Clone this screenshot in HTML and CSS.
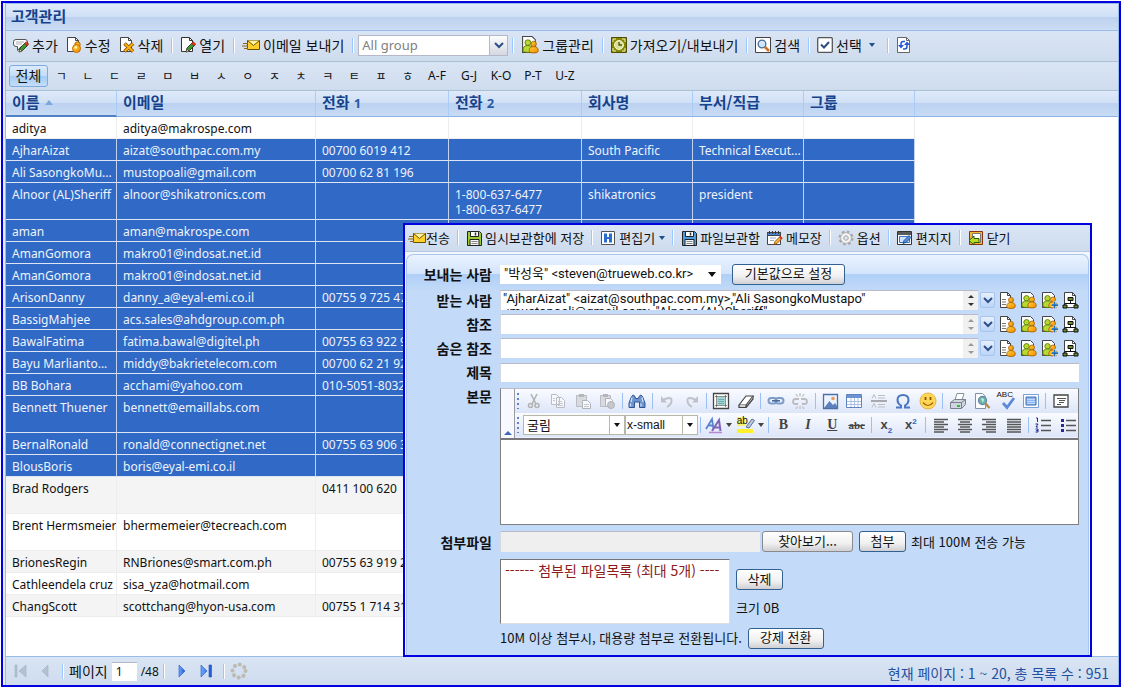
FILE: index.html
```html
<!DOCTYPE html>
<html lang="ko">
<head>
<meta charset="utf-8">
<title>고객관리</title>
<link rel="stylesheet" href="styles.css">
</head>
<body>
<svg class="sprite" aria-hidden="true">
  <defs>
    <linearGradient id="gOrange" x1="0" y1="0" x2="1" y2="1"><stop offset="0" stop-color="#ffd23a"/><stop offset="1" stop-color="#f08a00"/></linearGradient>
    <linearGradient id="gBlue" x1="0" y1="0" x2="1" y2="0"><stop offset="0" stop-color="#6fa8ff"/><stop offset="1" stop-color="#1c55d0"/></linearGradient>
  </defs>
  <symbol id="pencil" viewBox="0 0 16 16"><path d="M6 15l1-4 5-5 2.500 2.500-5 5z" fill="#3a9b2c" stroke="#222" stroke-width=".8"/><path d="M11.500 6.500l1.800-1.800 2.500 2.500L14 9z" fill="#e6331e" stroke="#8a1408" stroke-width=".6"/><path d="M6 15l.9-3 2.200 2.200z" fill="#f7d38b" stroke="#222" stroke-width=".5"/></symbol>
  <symbol id="add" viewBox="0 0 16 16"><path d="M3 2.500h9q2.500 0 2.500 2.500v2q0 2.500-2.500 2.500H8l-3.500 4V9.500H3Q.5 9.500.5 7V5Q.5 2.500 3 2.500z" fill="#fff" stroke="#555"/><path d="M3 5h8M3 7h6" stroke="#aaa"/><use href="#pencil"/></symbol>
  <symbol id="edit" viewBox="0 0 16 16"><path d="M1.500.5h8l3 3v11h-11z" fill="#fff" stroke="#444"/><path d="M9.500.5v3h3" fill="none" stroke="#444"/><circle cx="11.500" cy="7.500" r="2.700" fill="#ffb21c" stroke="#b56400"/><circle cx="10.500" cy="11.500" r="4" fill="url(#gOrange)" stroke="#c06800"/><circle cx="9.800" cy="10.500" r="1.400" fill="#fff3a8"/></symbol>
  <symbol id="del" viewBox="0 0 16 16"><path d="M1.500.5h8l3 3v11h-11z" fill="#fff" stroke="#444"/><path d="M9.500.5v3h3" fill="none" stroke="#444"/><path d="M5.500 6.500l8.500 8M14 6.500l-8.500 8" stroke="#7b4a00" stroke-width="3.600"/><path d="M5.800 6.800l8 7.500M13.800 6.800l-8 7.500" stroke="#ffb000" stroke-width="2"/></symbol>
  <symbol id="open" viewBox="0 0 16 16"><path d="M1.500.5h8l3 3v11h-11z" fill="#fff" stroke="#333"/><path d="M9.500.5v3h3" fill="none" stroke="#333"/><use href="#pencil"/></symbol>
  <symbol id="mail" viewBox="0 0 18 16"><path d="M5.500 3.500h12v9h-12z" fill="#ffd02a" stroke="#6b5200"/><path d="M5.500 3.500l6 5 6-5" fill="#fff2a0" stroke="#6b5200"/><path d="M1 6.500h5M0 9h6M2 11.500h4" stroke="#8f6418"/></symbol>
  <symbol id="person" viewBox="0 0 10 12"><circle cx="5" cy="3" r="2.500" stroke-width=".8"/><path d="M.7 9.500Q.7 5.500 5 5.500t4.300 4Q9.300 11.500 5 11.500T.7 9.500z" stroke-width=".8"/></symbol>
  <symbol id="one" viewBox="0 0 17 17"><path d="M1.500.5h7l3 3v12h-10z" fill="#fff" stroke="#444"/><path d="M8.500.5v3h3" fill="none" stroke="#444"/><path d="M3 7.500h4M3 10h4M3 12.500h4" stroke="#777"/><use href="#person" x="7" y="5" width="10" height="12" fill="url(#gOrange)" stroke="#a85c00"/></symbol>
  <symbol id="group" viewBox="0 0 17 17"><path d="M1.500.5h9l3 3v12h-12z" fill="#fff" stroke="#444"/><use href="#person" x="1" y="3" width="11" height="13" fill="#b8d832" stroke="#5c7a00"/><use href="#person" x="7" y="4" width="10" height="13" fill="url(#gOrange)" stroke="#a85c00"/></symbol>
  <symbol id="groupadd" viewBox="0 0 17 17"><use href="#group"/><path d="M13.500 9.500v7.500M10 13.200h7" stroke="#dff0ff" stroke-width="3"/><path d="M13.500 10v6.500M10.500 13.200h6.500" stroke="#1f6fb8" stroke-width="1.800"/></symbol>
  <symbol id="org" viewBox="0 0 17 17"><path d="M2.500.5h8l3 3v12h-11z" fill="#fff" stroke="#444"/><path d="M10.500.5v3h3" fill="none" stroke="#444"/><path d="M6 5.500h5v3H6zM1 13h4v3H1zM12 13h4v3h-4z" fill="#6a8a28" stroke="#111"/><path d="M8.500 8.500v3M3 13v-1.500h11V13" fill="none" stroke="#111"/></symbol>
  <symbol id="transfer" viewBox="0 0 16 16"><path d="M.5.5h15v15H.5z" fill="#858500" stroke="#4f4f00"/><circle cx="8" cy="8" r="4.500" fill="#d9e09b" stroke="#f5f7d0"/><path d="M8 5v3h3" fill="none" stroke="#555500" stroke-width="1.300"/><path d="M2 5V2h3M11 2h3v3M14 11v3h-3M5 14H2v-3" fill="none" stroke="#f0f0c0"/></symbol>
  <symbol id="search" viewBox="0 0 16 16"><path d="M.5.5h15v15H.5z" fill="#fff" stroke="#444"/><circle cx="7" cy="7" r="3.800" fill="#cfe8ff" stroke="#4a6a92" stroke-width="1.300"/><path d="M10 10l4 4" stroke="#d07020" stroke-width="2.500"/></symbol>
  <symbol id="check" viewBox="0 0 16 16"><rect x=".7" y=".7" width="14.600" height="14.600" rx="1" fill="#fff" stroke="#555" stroke-width="1.300"/><path d="M4 7.500L7 10.500l5-5.500" fill="none" stroke="#2c4f80" stroke-width="2"/></symbol>
  <symbol id="refresh" viewBox="0 0 16 16"><path d="M1.500.5h9l3 3v12h-12z" fill="#fff" stroke="#666"/><path d="M10.500.5v3h3" fill="none" stroke="#666"/><path d="M9 4.500H7Q5 4.500 5 7v2M7 12h1.500Q11 12 11 9.500V7" fill="none" stroke="#2458d8" stroke-width="1.500"/><path d="M2 8h6l-3 3.500zM8 8h6l-3-3.500z" fill="#2458d8"/></symbol>
  <symbol id="disk" viewBox="0 0 16 16"><path d="M1.500 1.500h12l2 2v12h-14z" stroke="#222"/><path d="M4.500 1.500h8v5h-8z" fill="#fff" stroke="#222"/><path d="M9.500 2.500v3" stroke="#333" stroke-width="1.500"/><path d="M4 9.500h9v6H4z" fill="#f4f4f4" stroke="#222"/><path d="M5.500 11.500h6M5.500 13.500h6" stroke="#888"/></symbol>
  <symbol id="hbox" viewBox="0 0 16 16"><path d="M1.500 1.500h13v13h-13z" fill="#fff" stroke="#555"/><path d="M4 3.500h3v3.500h2V3.500h3v9H9V9H7v3.500H4z" fill="#2a6fd0"/></symbol>
  <symbol id="memo" viewBox="0 0 16 16"><path d="M.5 2.500h13v12H.5z" fill="#fff" stroke="#444"/><path d="M.5 2.500h13v3H.5z" fill="#4c86d0" stroke="#444"/><path d="M2.500 1v3M5.500 1v3M8.500 1v3M11.500 1v3" stroke="#333"/><path d="M3 8h6M3 10.500h4" stroke="#9ab"/><path d="M7 14.500l1-3 5-5 2 2-5 5z" fill="#f4b13a" stroke="#8a3d10" stroke-width=".8"/><path d="M12 7.500l2 2 1.500-1.500-2-2z" fill="#d83020"/></symbol>
  <symbol id="gear" viewBox="0 0 16 16"><circle cx="8" cy="8" r="6.200" fill="none" stroke="#a8a8a8" stroke-width="2.600" stroke-dasharray="2.600 2.270"/><circle cx="8" cy="8" r="5.300" fill="#f7f7f7" stroke="#b4b4b4"/><circle cx="8" cy="8" r="2.300" fill="#dfe6ef" stroke="#a8a8a8"/></symbol>
  <symbol id="letter" viewBox="0 0 16 16"><path d="M.5 1.500h14v13H.5z" fill="#fff" stroke="#333"/><path d="M1 2h13v3H1z" fill="#5a5a5a"/><path d="M2.500 6.500h10v6h-10z" fill="#cfe3ff" stroke="#3d78c8"/><path d="M6 13.500l1-3 5-5 2 2-5 5z" fill="#4f90e0" stroke="#1c3f78" stroke-width=".8"/></symbol>
  <symbol id="close" viewBox="0 0 16 16"><path d="M1.500 1.500h13v13h-13z" fill="#f7b733" stroke="#8a3010"/><path d="M4.500 3.500h8v9h-8z" fill="#fff" stroke="#777"/><path d="M1 10.500l5-4.500v2.500h5v4H6V15z" fill="#b8dc28" stroke="#2a5c00"/></symbol>

  <symbol id="cut" viewBox="0 0 18 18"><g fill="none" stroke="#b3b3b3" stroke-width="1.600"><path d="M6 2l5 10M12 2L7 12"/><circle cx="5.500" cy="13.500" r="2"/><circle cx="12" cy="13.500" r="2"/></g></symbol>
  <symbol id="copy" viewBox="0 0 18 18"><path d="M2.500 2.500h5l3 3v7h-8zM7.500 5.500h5l3 3v7h-8z" fill="#f7f8fc" stroke="#b9bcc4"/><path d="M9 9.500h4M9 11.500h5M9 13.500h5M4 6.500h2M4 8.500h2" stroke="#c6c8ce"/></symbol>
  <symbol id="paste" viewBox="0 0 18 18"><path d="M2.500 3.500h10v11h-10z" fill="#d9dade" stroke="#b9bcc4"/><path d="M5 2h5v3H5z" fill="#b5b6ba"/><path d="M8.500 8.500h5l3 3v5h-8z" fill="#f7f8fc" stroke="#b0b2b8"/><path d="M10 12.500h5M10 14.500h5" stroke="#c6c8ce"/></symbol>
  <symbol id="pastespecial" viewBox="0 0 18 18"><path d="M2.500 3.500h10v11h-10z" fill="#d9dade" stroke="#b9bcc4"/><path d="M5 2h5v3H5z" fill="#b5b6ba"/><path d="M7.500 6.500h5l2 2v6h-7z" fill="#f7f8fc" stroke="#b0b2b8"/><circle cx="13" cy="13" r="3.500" fill="#c6c8ce" stroke="#b0b2b8"/></symbol>
  <symbol id="find" viewBox="0 0 18 18"><path d="M3.500 4.500Q5 1.500 7 4.500l.5 2h3l.5-2q2-3 3.500 0L17 11v4.500h-5.500V10h-5v5.500H1V11z" fill="#6c93d0" stroke="#2d5596"/><path d="M4 5.500L3 10M14 5.500l1 4.500M2.500 11.500v3M13 11.500v3" stroke="#c9dcf7" stroke-width="1.300"/></symbol>
  <symbol id="undo" viewBox="0 0 18 18"><path d="M5 8q8-4 8.500 0T9 15" fill="none" stroke="#bfc2c9" stroke-width="2"/><path d="M3 4v6.500h6z" fill="#bfc2c9"/></symbol>
  <symbol id="redo" viewBox="0 0 18 18"><path d="M13 8Q5 4 4.500 8T9 15" fill="none" stroke="#bfc2c9" stroke-width="2"/><path d="M15 4v6.500H9z" fill="#bfc2c9"/></symbol>
  <symbol id="selall" viewBox="0 0 18 18"><path d="M1.500 1.500h15v15h-15z" fill="#fff" stroke="#444" stroke-width="1.300"/><path d="M5 5h8v8H5z" fill="#9fd6d5"/><path d="M3.500 4.500h11M3.500 13.500h11M4.500 3.500v11M13.500 3.500v11" stroke="#222" stroke-dasharray="1 1"/><path d="M6 7.500h6M6 9.500h6M6 11.500h6" stroke="#6a9a9a" stroke-width=".7"/></symbol>
  <symbol id="eraser" viewBox="0 0 18 18"><path d="M2 13l7-9h7l-7 9z" fill="#fff" stroke="#444" stroke-width="1.200"/><path d="M2 13v2.500h7V13M9 15.500l7-8.500V4" fill="#cfd0d4" stroke="#444" stroke-width="1.200"/></symbol>
  <symbol id="link" viewBox="0 0 18 18"><g fill="none" stroke-width="2"><rect x="1.500" y="6" width="8" height="5.500" rx="2.700" stroke="#7f9cc6"/><rect x="8.500" y="6" width="8" height="5.500" rx="2.700" stroke="#7f9cc6"/><path d="M5 8.800h8" stroke="#3d659f" stroke-width="1.500"/></g></symbol>
  <symbol id="unlink" viewBox="0 0 18 18"><g fill="none" stroke="#bcbcc0" stroke-width="1.800"><path d="M8 7H4.500Q2 7 2 9.500T4.500 12H7M10 7h3.500Q16 7 16 9.500T13.500 12H11"/><path d="M9 1v3.500M5 2l1.500 2.500M13 2l-1.500 2.500M9 14v3M5 17l1.500-2.500M13 17l-1.500-2.500" stroke-width="1.200"/></g></symbol>
  <symbol id="image" viewBox="0 0 18 18"><path d="M2.500 2.500h14v14h-14z" fill="#eaf3ff" stroke="#4d6fa8" stroke-width="1.300"/><path d="M3 16l5.500-7L12 13l2-2 2 3v2z" fill="#5b80bd"/><circle cx="12" cy="6.500" r="1.800" fill="#e89a5a"/></symbol>
  <symbol id="table" viewBox="0 0 18 18"><path d="M1.500 2.500h15v13h-15z" fill="#fff" stroke="#5e83be"/><path d="M2 3h14v3H2z" fill="#6d94d2"/><path d="M2 9.500h14M2 12.500h14M6 6v9M9.500 6v9M13 6v9" stroke="#a9c0e2"/></symbol>
  <symbol id="hr" viewBox="0 0 18 18"><path d="M1 9h16" stroke="#a8a8ad" stroke-width="2"/><path d="M8 3.500h7M8 6h7M8 12.500h7M8 15h7" stroke="#bebec3"/><path d="M2 6.500l2-4 2 4M2 15.500l2-4 2 4" fill="none" stroke="#bebec3"/></symbol>
  <symbol id="omega" viewBox="0 0 18 18"><path d="M2 15.500h5v-2Q3.500 11.500 3.500 8 3.500 3 9 3t5.500 5q0 3.500-3.500 5.500v2h5" fill="none" stroke="#4b78c0" stroke-width="2"/></symbol>
  <symbol id="smile" viewBox="0 0 18 18"><circle cx="9" cy="9" r="8" fill="#ffd757" stroke="#e6b545"/><path d="M6.500 5v3M11.500 5v3" stroke="#8b5500" stroke-width="1.800"/><path d="M4 10.500q5 6 10 0" fill="none" stroke="#a96010" stroke-width="1.200"/></symbol>
  <symbol id="print" viewBox="0 0 18 18"><path d="M6 8l2-6.500h7L13 8z" fill="#fff" stroke="#8a9098"/><path d="M1.500 10.500l4-3h11v5l-4 4h-11z" fill="#cfd5de" stroke="#7a808c"/><path d="M1.500 10.500h11v6M12.500 10.500l4-3" fill="none" stroke="#7a808c"/><path d="M8 13h3v2H8z" fill="#35ba3a"/></symbol>
  <symbol id="preview" viewBox="0 0 18 18"><path d="M2.500 1.500h7l3 3v12h-10z" fill="#fff" stroke="#8291a8"/><circle cx="9.500" cy="8.500" r="4" fill="#6bb8a0" stroke="#6d87ac" stroke-width="1.300"/><path d="M8 6l3 1-1 4z" fill="#c9efff"/><path d="M12.500 11.500l4 4.500" stroke="#b38a48" stroke-width="2.200"/></symbol>
  <symbol id="spell" viewBox="0 0 18 18"><path d="M5 11l4 4.500L16 6" fill="none" stroke="#5d8ad8" stroke-width="2.800"/></symbol>
  <symbol id="full" viewBox="0 0 18 18"><path d="M1.500 2.500h15v13h-15z" fill="#fff" stroke="#7c9fd4"/><path d="M4 5h10v8H4z" fill="#8cb6ef" stroke="#3f6fb8"/><path d="M5 7.500h8M5 9.500h8M5 11.500h8" stroke="#d7e7ff" stroke-width=".7"/></symbol>
  <symbol id="source" viewBox="0 0 18 18"><path d="M2 3h14v12H2z" fill="#fff" stroke="#444" stroke-width="1.300"/><path d="M5 6.500h9M7 8.500h6M7 10.500h5M5 12.500h4" stroke="#555"/></symbol>
  <symbol id="fontcolor" viewBox="0 0 18 18"><path d="M1 13L7 3l1.500 10M4 9.500h4" fill="none" stroke="#5784cc" stroke-width="1.800"/><path d="M7 15L14 4l1.500 11M10 11.500h4.500" fill="none" stroke="#8064b8" stroke-width="2"/><path d="M4 16.500h13" stroke="#b68ad0" stroke-width="1.500"/></symbol>
  <symbol id="marker" viewBox="0 0 18 18"><path d="M0 1h8v9H0z" fill="#f7f06a"/><path d="M9 11l6-8 2.500 1.500L12 12z" fill="#b9c8de" stroke="#5a6f90"/><path d="M0 13h16v4H0z" fill="#fff02a"/></symbol>
  <symbol id="al" viewBox="0 0 18 18"><path d="M2 3.500h14M2 8.500h14M2 13.500h14M2 6h10M2 11h10M2 16h10" stroke="#555" stroke-width="1.300"/></symbol>
  <symbol id="ac" viewBox="0 0 18 18"><path d="M2 3.500h14M2 8.500h14M2 13.500h14M4 6h10M4 11h10M4 16h10" stroke="#555" stroke-width="1.300"/></symbol>
  <symbol id="ar" viewBox="0 0 18 18"><path d="M2 3.500h14M2 8.500h14M2 13.500h14M6 6h10M6 11h10M6 16h10" stroke="#555" stroke-width="1.300"/></symbol>
  <symbol id="aj" viewBox="0 0 18 18"><path d="M2 3.500h14M2 8.500h14M2 13.500h14M2 6h14M2 11h14M2 16h14" stroke="#555" stroke-width="1.300"/></symbol>
  <symbol id="ol" viewBox="0 0 18 18"><path d="M7 4.500h10M7 9.500h10M7 14.500h10" stroke="#555" stroke-width="1.300"/><path d="M2 2h1.500v4M1.500 8H4L2 11h2M1.500 13H4v1.500H2.500 4V16H1.500" fill="none" stroke="#282898"/></symbol>
  <symbol id="ul" viewBox="0 0 18 18"><path d="M7 4.500h10M7 9.500h10M7 14.500h10" stroke="#555" stroke-width="1.300"/><path d="M2 3h3v3H2zM2 8h3v3H2zM2 13h3v3H2z" fill="#282898"/></symbol>

  <symbol id="first" viewBox="0 0 14 14"><path d="M1 1h2v12H1zM12 1v12L5 7z" fill="#b4c2cf" stroke="#9fb0bf" stroke-width=".6"/></symbol>
  <symbol id="prev" viewBox="0 0 14 14"><path d="M10 1v12L4 7z" fill="#b4c2cf" stroke="#9fb0bf" stroke-width=".6"/></symbol>
  <symbol id="next" viewBox="0 0 14 14"><path d="M4 1v12l6-6z" fill="url(#gBlue)" stroke="#1f56c4" stroke-width=".6"/></symbol>
  <symbol id="last" viewBox="0 0 14 14"><path d="M2 1v12l6-6zM10 1h2.500v12H10z" fill="url(#gBlue)" stroke="#1f56c4" stroke-width=".6"/></symbol>
  <symbol id="load" viewBox="0 0 18 18"><circle cx="9" cy="9" r="6.500" fill="none" stroke="#bdb9b3" stroke-width="4" stroke-linecap="round" stroke-dasharray=".1 5"/></symbol>
  <symbol id="chev" viewBox="0 0 10 10"><path d="M1 3l4 4 4-4" fill="none" stroke="#2c4f88" stroke-width="2"/></symbol>
</svg>

<main class="frame">
  <section class="panel">
    <h1 class="title">고객관리</h1>
    <div class="toolbar">
      <button class="tool"><svg class="i16"><use href="#add"/></svg>추가</button>
      <button class="tool"><svg class="i16"><use href="#edit"/></svg>수정</button>
      <button class="tool"><svg class="i16"><use href="#del"/></svg>삭제</button>
      <i class="sep"></i>
      <button class="tool"><svg class="i16"><use href="#open"/></svg>열기</button>
      <i class="sep"></i>
      <button class="tool"><svg class="i18"><use href="#mail"/></svg>이메일 보내기</button>
      <i class="sep"></i>
      <label class="combo"><select aria-label="그룹"><option>All group</option></select><span class="trigger"><svg class="i10"><use href="#chev"/></svg></span></label>
      <i class="sep tight"></i>
      <button class="tool"><svg class="i18"><use href="#group"/></svg>그룹관리</button>
      <i class="sep"></i>
      <button class="tool"><svg class="i16"><use href="#transfer"/></svg>가져오기/내보내기</button>
      <i class="sep"></i>
      <button class="tool"><svg class="i16"><use href="#search"/></svg>검색</button>
      <i class="sep"></i>
      <button class="tool"><svg class="i16"><use href="#check"/></svg>선택<span class="caret wide"></span></button>
      <i class="sep"></i>
      <button class="tool" aria-label="새로고침"><svg class="i16"><use href="#refresh"/></svg></button>
    </div>
    <div class="alpha">
      <button class="all">전체</button>
      <div class="jamo">
        <button>ㄱ</button><button>ㄴ</button><button>ㄷ</button><button>ㄹ</button><button>ㅁ</button><button>ㅂ</button><button>ㅅ</button><button>ㅇ</button><button>ㅈ</button><button>ㅊ</button><button>ㅋ</button><button>ㅌ</button><button>ㅍ</button><button>ㅎ</button>
      </div>
      <div class="latin"><button>A-F</button><button>G-J</button><button>K-O</button><button>P-T</button><button>U-Z</button></div>
    </div>
    <div class="grid">
      <table>
        <colgroup><col class="c-name"><col class="c-mail"><col class="c-tel"><col class="c-tel"><col class="c-name"><col class="c-name"><col class="c-name"><col></colgroup>
        <thead><tr><th class="sorted">이름<span class="asc"></span></th><th>이메일</th><th>전화 <b>1</b></th><th>전화 <b>2</b></th><th>회사명</th><th>부서/직급</th><th>그룹</th><td class="fill"></td></tr></thead>
        <tbody>
          <tr><td>aditya</td><td>aditya@makrospe.com</td><td></td><td></td><td></td><td></td><td></td><td class="fill"></td></tr>
          <tr class="on"><td>AjharAizat</td><td>aizat@southpac.com.my</td><td>00700 6019 412</td><td></td><td>South Pacific</td><td>Technical Execut...</td><td></td><td class="fill"></td></tr>
          <tr class="on"><td>Ali SasongkoMu...</td><td>mustopoali@gmail.com</td><td>00700 62 81 196</td><td></td><td></td><td></td><td></td><td class="fill"></td></tr>
          <tr class="on tall"><td>Alnoor (AL)Sheriff</td><td>alnoor@shikatronics.com</td><td></td><td>1-800-637-6477<br>1-800-637-6477</td><td>shikatronics</td><td>president</td><td></td><td class="fill"></td></tr>
          <tr class="on"><td>aman</td><td>aman@makrospe.com</td><td></td><td></td><td></td><td></td><td></td><td class="fill"></td></tr>
          <tr class="on"><td>AmanGomora</td><td>makro01@indosat.net.id</td><td></td><td></td><td></td><td></td><td></td><td class="fill"></td></tr>
          <tr class="on"><td>AmanGomora</td><td>makro01@indosat.net.id</td><td></td><td></td><td></td><td></td><td></td><td class="fill"></td></tr>
          <tr class="on"><td>ArisonDanny</td><td>danny_a@eyal-emi.co.il</td><td>00755 9 725 47</td><td></td><td></td><td></td><td></td><td class="fill"></td></tr>
          <tr class="on"><td>BassigMahjee</td><td>acs.sales@ahdgroup.com.ph</td><td></td><td></td><td></td><td></td><td></td><td class="fill"></td></tr>
          <tr class="on"><td>BawalFatima</td><td>fatima.bawal@digitel.ph</td><td>00755 63 922 9</td><td></td><td></td><td></td><td></td><td class="fill"></td></tr>
          <tr class="on"><td>Bayu Marlianto...</td><td>middy@bakrietelecom.com</td><td>00700 62 21 92</td><td></td><td></td><td></td><td></td><td class="fill"></td></tr>
          <tr class="on"><td>BB Bohara</td><td>acchami@yahoo.com</td><td>010-5051-8032</td><td></td><td></td><td></td><td></td><td class="fill"></td></tr>
          <tr class="on tall"><td>Bennett Thuener</td><td>bennett@emaillabs.com</td><td></td><td></td><td></td><td></td><td></td><td class="fill"></td></tr>
          <tr class="on"><td>BernalRonald</td><td>ronald@connectignet.net</td><td>00755 63 906 3</td><td></td><td></td><td></td><td></td><td class="fill"></td></tr>
          <tr class="on"><td>BlousBoris</td><td>boris@eyal-emi.co.il</td><td></td><td></td><td></td><td></td><td></td><td class="fill"></td></tr>
          <tr class="tall"><td>Brad Rodgers</td><td></td><td>0411 100 620</td><td></td><td></td><td></td><td></td><td class="fill"></td></tr>
          <tr class="tall"><td>Brent Hermsmeier</td><td>bhermemeier@tecreach.com</td><td></td><td></td><td></td><td></td><td></td><td class="fill"></td></tr>
          <tr><td>BrionesRegin</td><td>RNBriones@smart.com.ph</td><td>00755 63 919 2</td><td></td><td></td><td></td><td></td><td class="fill"></td></tr>
          <tr><td>Cathleendela cruz</td><td>sisa_yza@hotmail.com</td><td></td><td></td><td></td><td></td><td></td><td class="fill"></td></tr>
          <tr><td>ChangScott</td><td>scottchang@hyon-usa.com</td><td>00755 1 714 31</td><td></td><td></td><td></td><td></td><td class="fill"></td></tr>
        </tbody>
      </table>
    </div>
    <footer class="pager">
      <button aria-label="처음"><svg class="i14"><use href="#first"/></svg></button>
      <button aria-label="이전"><svg class="i14"><use href="#prev"/></svg></button>
      <i class="sep"></i>
      <label class="pageno">페이지 <input value="1"></label><span class="pages">/48</span>
      <i class="sep"></i>
      <button aria-label="다음"><svg class="i14"><use href="#next"/></svg></button>
      <button aria-label="마지막"><svg class="i14"><use href="#last"/></svg></button>
      <i class="sep"></i>
      <button class="load" aria-label="새로고침"><svg class="i18"><use href="#load"/></svg></button>
      <span class="status">현재 페이지 : 1 ~ 20, 총 목록 수 : 951</span>
    </footer>
  </section>

  <section class="dialog" role="dialog" aria-label="메일 쓰기">
    <div class="dtools">
      <button class="tool near"><svg class="i18"><use href="#mail"/></svg>전송</button>
      <i class="sep"></i>
      <button class="tool"><svg class="i16 green"><use href="#disk"/></svg>임시보관함에 저장</button>
      <i class="sep"></i>
      <button class="tool"><svg class="i16"><use href="#hbox"/></svg>편집기<span class="caret"></span></button>
      <i class="sep"></i>
      <button class="tool"><svg class="i16 blue"><use href="#disk"/></svg>파일보관함</button>
      <button class="tool"><svg class="i16"><use href="#memo"/></svg>메모장</button>
      <i class="sep"></i>
      <button class="tool"><svg class="i16"><use href="#gear"/></svg>옵션</button>
      <i class="sep"></i>
      <button class="tool"><svg class="i16"><use href="#letter"/></svg>편지지</button>
      <i class="sep"></i>
      <button class="tool"><svg class="i16"><use href="#close"/></svg>닫기</button>
    </div>
    <form class="form">
      <div class="row first">
        <label class="lab" for="from">보내는 사람</label>
        <span class="from"><select id="from"><option>"박성욱" &lt;steven@trueweb.co.kr&gt;</option></select></span>
        <button type="button" class="btn w-default">기본값으로 설정</button>
      </div>
      <div class="row">
        <label class="lab" for="to">받는 사람</label>
        <div class="addr on"><textarea id="to">"AjharAizat" &lt;aizat@southpac.com.my&gt;,"Ali SasongkoMustapo" &lt;mustopoali@gmail.com&gt;,"Alnoor (AL)Sheriff"</textarea><span class="spin"></span></div>
        <div class="picks"><button type="button" class="drop" aria-label="최근"><svg class="i10"><use href="#chev"/></svg></button><button type="button" aria-label="주소록"><svg class="i17"><use href="#one"/></svg></button><button type="button" aria-label="그룹"><svg class="i17"><use href="#group"/></svg></button><button type="button" aria-label="그룹 추가"><svg class="i17"><use href="#groupadd"/></svg></button><button type="button" aria-label="조직도"><svg class="i17"><use href="#org"/></svg></button></div>
      </div>
      <div class="row">
        <label class="lab" for="cc">참조</label>
        <div class="addr"><textarea id="cc"></textarea><span class="spin"></span></div>
        <div class="picks"><button type="button" class="drop" aria-label="최근"><svg class="i10"><use href="#chev"/></svg></button><button type="button" aria-label="주소록"><svg class="i17"><use href="#one"/></svg></button><button type="button" aria-label="그룹"><svg class="i17"><use href="#group"/></svg></button><button type="button" aria-label="그룹 추가"><svg class="i17"><use href="#groupadd"/></svg></button><button type="button" aria-label="조직도"><svg class="i17"><use href="#org"/></svg></button></div>
      </div>
      <div class="row">
        <label class="lab" for="bcc">숨은 참조</label>
        <div class="addr"><textarea id="bcc"></textarea><span class="spin"></span></div>
        <div class="picks"><button type="button" class="drop" aria-label="최근"><svg class="i10"><use href="#chev"/></svg></button><button type="button" aria-label="주소록"><svg class="i17"><use href="#one"/></svg></button><button type="button" aria-label="그룹"><svg class="i17"><use href="#group"/></svg></button><button type="button" aria-label="그룹 추가"><svg class="i17"><use href="#groupadd"/></svg></button><button type="button" aria-label="조직도"><svg class="i17"><use href="#org"/></svg></button></div>
      </div>
      <div class="row">
        <label class="lab" for="subject">제목</label>
        <input class="field" id="subject">
      </div>
      <div class="row top body">
        <label class="lab" for="content">본문</label>
        <div class="editor">
          <div class="ebar">
            <div class="fold"></div>
            <div class="erows">
              <div class="erow">
                <span class="grip"></span>
                <div class="eitems short">
                  <button type="button" aria-label="잘라내기"><svg class="i18"><use href="#cut"/></svg></button><button type="button" aria-label="복사"><svg class="i18"><use href="#copy"/></svg></button><button type="button" aria-label="붙여넣기"><svg class="i18"><use href="#paste"/></svg></button><button type="button" aria-label="텍스트로 붙여넣기"><svg class="i18"><use href="#pastespecial"/></svg></button><i></i>
                  <button type="button" aria-label="찾기"><svg class="i18"><use href="#find"/></svg></button><i></i>
                  <button type="button" aria-label="실행 취소"><svg class="i18"><use href="#undo"/></svg></button><button type="button" aria-label="다시 실행"><svg class="i18"><use href="#redo"/></svg></button><i></i>
                  <button type="button" aria-label="모두 선택"><svg class="i18"><use href="#selall"/></svg></button><button type="button" aria-label="서식 지우기"><svg class="i18"><use href="#eraser"/></svg></button><i></i>
                  <button type="button" aria-label="링크"><svg class="i18"><use href="#link"/></svg></button><button type="button" aria-label="링크 해제"><svg class="i18"><use href="#unlink"/></svg></button><i></i>
                  <button type="button" aria-label="이미지"><svg class="i18"><use href="#image"/></svg></button><button type="button" aria-label="표"><svg class="i18"><use href="#table"/></svg></button><button type="button" aria-label="가로줄"><svg class="i18"><use href="#hr"/></svg></button><button type="button" aria-label="특수문자"><svg class="i18"><use href="#omega"/></svg></button><button type="button" aria-label="이모티콘"><svg class="i18"><use href="#smile"/></svg></button><i></i>
                  <button type="button" aria-label="인쇄"><svg class="i18"><use href="#print"/></svg></button><button type="button" aria-label="미리보기"><svg class="i18"><use href="#preview"/></svg></button><button type="button" class="abc" aria-label="맞춤법"><svg class="i18"><use href="#spell"/></svg><span>ABC</span></button><button type="button" aria-label="전체 화면"><svg class="i18"><use href="#full"/></svg></button><i></i>
                  <button type="button" aria-label="소스"><svg class="i18"><use href="#source"/></svg></button>
                </div>
              </div>
              <div class="erow">
                <span class="grip"></span>
                <span class="esel font"><select aria-label="글꼴"><option>굴림</option></select></span>
                <span class="esel size"><select aria-label="크기"><option>x-small</option></select></span>
                <div class="eitems">
                  <i></i>
                  <button type="button" class="more" aria-label="글자색"><svg class="i18"><use href="#fontcolor"/></svg></button><button type="button" class="more mark" aria-label="배경색"><svg class="i18"><use href="#marker"/></svg><span>ab</span></button><i></i>
                  <button type="button" class="ch"><b>B</b></button><button type="button" class="ch"><em>I</em></button><button type="button" class="ch"><u>U</u></button><button type="button" class="ch small"><s>abc</s></button><i></i>
                  <button type="button" class="ch script">x<sub>2</sub></button><button type="button" class="ch script">x<sup>2</sup></button><i></i>
                  <button type="button" aria-label="왼쪽"><svg class="i18"><use href="#al"/></svg></button><button type="button" aria-label="가운데"><svg class="i18"><use href="#ac"/></svg></button><button type="button" aria-label="오른쪽"><svg class="i18"><use href="#ar"/></svg></button><button type="button" aria-label="양쪽"><svg class="i18"><use href="#aj"/></svg></button><i></i>
                  <button type="button" aria-label="번호 목록"><svg class="i18"><use href="#ol"/></svg></button><button type="button" aria-label="글머리 목록"><svg class="i18"><use href="#ul"/></svg></button>
                </div>
              </div>
            </div>
          </div>
          <textarea id="content" class="content"></textarea>
        </div>
      </div>
      <div class="row attach">
        <label class="lab" for="file">첨부파일</label>
        <input class="field file" id="file" readonly>
        <button type="button" class="btn gray w-browse">찾아보기...</button>
        <button type="button" class="btn w-short">첨부</button>
        <span>최대 100M 전송 가능</span>
      </div>
      <div class="row top files">
        <span class="lab"></span>
        <select size="4" class="list" aria-label="첨부된 파일목록"><option>------ 첨부된 파일목록 (최대 5개) ----</option></select>
        <div class="side"><button type="button" class="btn w-short">삭제</button><span>크기 0B</span></div>
      </div>
      <div class="row">
        <span class="lab"></span>
        <span>10M 이상 첨부시, 대용량 첨부로 전환됩니다.</span>
        <button type="button" class="btn w-force">강제 전환</button>
      </div>
    </form>
  </section>
</main>
</body>
</html>
```
FILE: styles.css
```css
* { box-sizing: border-box; }

body {
  margin: 0;
  padding: 1px;
  height: 100vh;
  background: #fff;
  color: #111;
  font: 13px/16px "Noto Sans CJK KR", sans-serif;
}

button, input, select, textarea { font: inherit; color: inherit; margin: 0; padding: 0; border: 0; border-radius: 0; background: none; outline: 0; }
button { display: flex; align-items: center; justify-content: center; white-space: nowrap; }
select { appearance: none; }
textarea { resize: none; overflow: hidden; display: block; }
svg { display: block; flex: none; }
.sprite { position: absolute; width: 0; height: 0; }
.i10 { width: 10px; height: 10px; }
.i14 { width: 14px; height: 14px; }
.i16 { width: 16px; height: 16px; }
.i17 { width: 17px; height: 17px; }
.i18 { width: 18px; height: 18px; }

.frame { position: relative; height: 100%; border: 2px solid #0000e0; padding: 0 0 0 2px; background: #e4eefb; }
.panel { height: 100%; display: flex; flex-direction: column; border: 1px solid #99bbe8; border-bottom: 0; background: #fff; }

.title {
  margin: 0; padding: 0 5px; height: 27px; line-height: 24px;
  font-size: 15px; color: #15428b;
  border-bottom: 1px solid #99bbe8;
  background: linear-gradient(#e0ebfa, #cfdff5 50%, #bcd1ef 50%, #ccddf4);
}

.toolbar, .alpha, .pager { display: flex; align-items: center; background: linear-gradient(#d9e5f4, #cfdcee); }
.toolbar { height: 31px; padding: 0 7px 2px; gap: 8px; font-size: 14px; border-bottom: 1px solid #a9bfd3; }
.tool { gap: 3px; }
.sep { flex: none; width: 2px; height: 15px; background: #98c8ff; border-right: 1px solid #fff; }
.toolbar .sep { margin-right: -1px; }
.caret { width: 0; border: 3px solid transparent; border-top: 4px solid #1d4f8c; border-bottom: 0; margin-left: 1px; }
.caret.wide { margin: 0 4px; }
.toolbar .tight { margin-left: -4px; }

.combo { display: flex; width: 150px; height: 21px; background: #fff; border: 1px solid #b5b8c8; margin-left: -3px; }
.combo select { flex: 1; padding: 0 3px; color: #808080; font: 13px/18px "Noto Sans", sans-serif; }
.trigger { width: 18px; display: flex; align-items: center; justify-content: center; border-left: 1px solid #b5b8c8; background: linear-gradient(#fdfdfd, #d3d8e0); }

.alpha { height: 29px; padding: 0 3px; border-bottom: 1px solid #a9bfd3; }
.all { width: 39px; height: 22px; padding-bottom: 2px; border: 1px solid #7eabdc; border-radius: 3px; font-size: 14px; background: linear-gradient(#dcebfd, #c4dcf8 50%, #a5cbf4 50%, #c5defa); }
.jamo { flex: 0 0 373px; display: grid; grid-template-columns: repeat(14, 1fr); font-size: 12px; }
.latin { display: grid; grid-template-columns: repeat(5, 32px); font: 12px/16px "Noto Sans", sans-serif; }

.grid { flex: 1; min-height: 0; overflow: hidden; }
table { width: 100%; table-layout: fixed; border-collapse: separate; border-spacing: 0; font: 12px/15px "Noto Sans", sans-serif; }
.c-name { width: 111px; }
.c-mail { width: 199px; }
.c-tel { width: 133px; }
thead tr { height: 26px; }
thead th, thead td {
  text-align: left; padding: 0 6px 3px; font: bold 15px/20px "Noto Sans CJK KR", sans-serif; color: #15428b;
  border-right: 1px solid #aaccf6; border-bottom: 1px solid #8db2e3;
  background: linear-gradient(#dfeafa, #cfdff5 50%, #bcd2f1 50%, #c8dbf4);
}
thead .fill { border-right: 0; }
th b { font: bold 13px/20px "Noto Sans", sans-serif; color: #2a5ba8; }
thead th.sorted { border-bottom: 2px solid #4f7fc4; }
.asc { display: inline-block; border: 4px solid transparent; border-bottom: 5px solid #7fa6dc; border-top: 0; margin: 0 0 3px 5px; }
tbody td { height: 22px; padding: 4px 0 2px 6px; vertical-align: top; white-space: nowrap; overflow: hidden; border-right: 1px solid #ededed; border-bottom: 1px solid #ededed; }
.tall td { height: 37px; }
tbody tr:nth-child(even) td { background: #f4f4f4; }
tbody tr.on td { background: #3169c6; color: #eef3fc; border-right-color: #c3d2ee; border-bottom-color: #dde5f5; }
tbody tr td.fill, tbody tr.on td.fill, tbody tr:nth-child(even) td.fill { background: #fff; border-color: #fff; }

.pager { height: 29px; padding: 0 9px 0 8px; gap: 10px; border-top: 1px solid #99bbe8; }
.pageno { display: flex; align-items: center; gap: 4px; font-size: 14px; margin: 0 -6px 0 -5px; }
.pageno input { width: 25px; height: 19px; padding: 0 4px; background: #fff; border-top: 1px solid #b5b8c8; font: 12px "Noto Sans", sans-serif; }
.pages { font: 12px "Noto Sans", sans-serif; margin-right: -6px; }
.load { margin-left: -5px; }
.status { margin-left: auto; color: #2350a0; font-size: 14px; padding-top: 4px; }

.dialog { position: absolute; right: 27px; bottom: 28px; width: 689px; display: flex; flex-direction: column; border: 2px solid #0000e0; background: #f2f7fe; }
.dtools { height: 27px; display: flex; align-items: center; gap: 7px; padding: 0 3px 1px; background: linear-gradient(#dbe6f5, #cddbee); border-bottom: 1px solid #b5c8dc; margin-bottom: 2px; }
.near { gap: 0; }
.green { fill: #9ccc30; }
.blue { fill: #4d9be0; }

.form {
  margin: 0 1px; padding: 5px 9px 5px 8px;
  border: 1px solid #a9c6ec; border-bottom: 0; border-radius: 7px 7px 0 0;
  background: linear-gradient(#eaf3ff, #d3e4fb 19px, #afcff7 19px, #c3daf8 36px);
}
.row { display: flex; align-items: center; min-height: 24px; }
.row.first { min-height: 28px; }
.row.top { align-items: flex-start; }
.lab { flex: none; width: 77px; margin-right: 8px; text-align: right; font-size: 14px; font-weight: bold; white-space: nowrap; }
.from { display: flex; width: 221px; height: 19px; background: #fff; align-items: center; padding: 0 5px 0 4px; margin-right: 11px; }
.from select { flex: 1; min-width: 0; }
.from select, .addr textarea { font-family: Roboto, "Noto Sans CJK KR", sans-serif; }
.from::after { content: ""; border: 4px solid transparent; border-top: 5px solid #111; border-bottom: 0; }
.addr { flex: 1; display: flex; height: 20px; background: #fff; border-top: 1px solid #b9bcc6; border-left: 1px solid #d5d9e2; overflow: hidden; }
.addr textarea { flex: 1; min-width: 0; line-height: 13px; height: 19px; padding: 1px 2px 0; }
.spin { width: 15px; background: #f0f0f0; display: flex; flex-direction: column; align-items: center; justify-content: center; gap: 5px; }
.spin::before, .spin::after { content: ""; border: 3px solid transparent; }
.spin::before { border-bottom-color: #999; border-top: 0; }
.spin::after { border-top-color: #999; border-bottom: 0; }
.addr.on .spin::before { border-bottom-color: #333; }
.addr.on .spin::after { border-top-color: #333; }
.picks { flex: none; display: grid; grid-template-columns: 15px repeat(4, 17px); column-gap: 4px; margin-left: 2px; }
.drop { height: 16px; border: 1px solid #a9c4ec; border-radius: 2px; background: linear-gradient(#e7f0fd, #bcd4f7); }
.field { flex: 1; height: 19px; background: #fff; border-top: 1px solid #b9bcc6; border-left: 1px solid #d5d9e2; }
.file { flex: 0 0 260px; height: 21px; background: #efefef; }
.btn { height: 21px; border: 1px solid #33618f; border-radius: 3px; background: linear-gradient(#fff, #f0f0f0 60%, #cfcfd4); padding-bottom: 2px; }
.btn.gray { border-color: #8a8a8a; }
.w-default { width: 113px; }
.w-browse { width: 91px; margin: 0 6px 0 2px; }
.w-short { width: 47px; }
.w-force { width: 76px; margin-left: 6px; }
.attach { padding-top: 6px; }
.attach span { margin-left: 5px; }
.files { padding: 7px 0 2px; }
.list { width: 230px; height: 65px; background: #fff; color: #8b1a1a; font-size: 14px; border: 1px solid #ddd; border-top-color: #777; border-left-color: #777; overflow: hidden; }
.list option { padding: 0 4px; min-height: 16px; }
.side { margin-left: 6px; padding-top: 10px; display: flex; flex-direction: column; gap: 10px; align-items: flex-start; }

.body { padding-top: 4px; }
.editor { flex: 1; min-width: 0; border: 1px solid #808080; border-top-color: #b9bcc6; background: #fff; }
.ebar { display: flex; height: 51px; border-bottom: 2px solid #77777c; background: #eef2fc; }
.fold { width: 14px; border-right: 1px solid #9a9aa2; display: flex; align-items: flex-end; justify-content: center; padding-bottom: 3px; background: #f7f9fe; }
.fold::after { content: ""; border: 4px solid transparent; border-bottom: 4px solid #3f68b8; border-top: 0; }
.erows { flex: 1; min-width: 0; }
.erow { display: flex; align-items: center; height: 24px; background: linear-gradient(#f9fbff, #dde5f8); }
.grip { flex: none; width: 2px; height: 16px; margin: 0 4px 0 2px; background: repeating-linear-gradient(#5c84d0 0 2px, transparent 2px 5px); }
.eitems { flex: 1; display: flex; align-items: center; justify-content: space-between; }
.eitems.short { padding: 0 7px 0 1px; }
.eitems i { width: 1px; height: 16px; background: #9cc0f4; }
.eitems button { width: 20px; height: 20px; }
.esel { display: flex; align-items: center; height: 20px; background: #fff; border: 1px solid #b8b8a8; }
.esel select { flex: 1; min-width: 0; align-self: stretch; padding-left: 3px; border-right: 1px solid #b8b8a8; }
.esel::after { content: ""; border: 3px solid transparent; border-top: 4px solid #111; border-bottom: 0; margin: 0 4px; }
.font { width: 102px; }
.size { width: 73px; font: 12px "Liberation Sans", sans-serif; margin-right: 2px; }
.size select { padding-left: 1px; }
.eitems .more { width: 27px; gap: 3px; position: relative; }
.more::after { content: ""; border: 3px solid transparent; border-top: 4px solid #444; border-bottom: 0; }
.mark span { position: absolute; left: 0; top: 0; font: 10px/12px "Liberation Sans", sans-serif; }
.abc { position: relative; }
.abc span { position: absolute; left: 0; top: 0; font: 8px/8px "Liberation Sans", sans-serif; }
.ch { font: bold 14px/18px "Liberation Serif", serif; color: #444; }
.ch.small { font-size: 11px; }
.ch.script { display: block; font: bold 13px/18px "Liberation Sans", sans-serif; }
.ch sub, .ch sup { font-size: 8px; line-height: 0; color: #2f66c0; }
.content { width: 100%; height: 84px; }
```
